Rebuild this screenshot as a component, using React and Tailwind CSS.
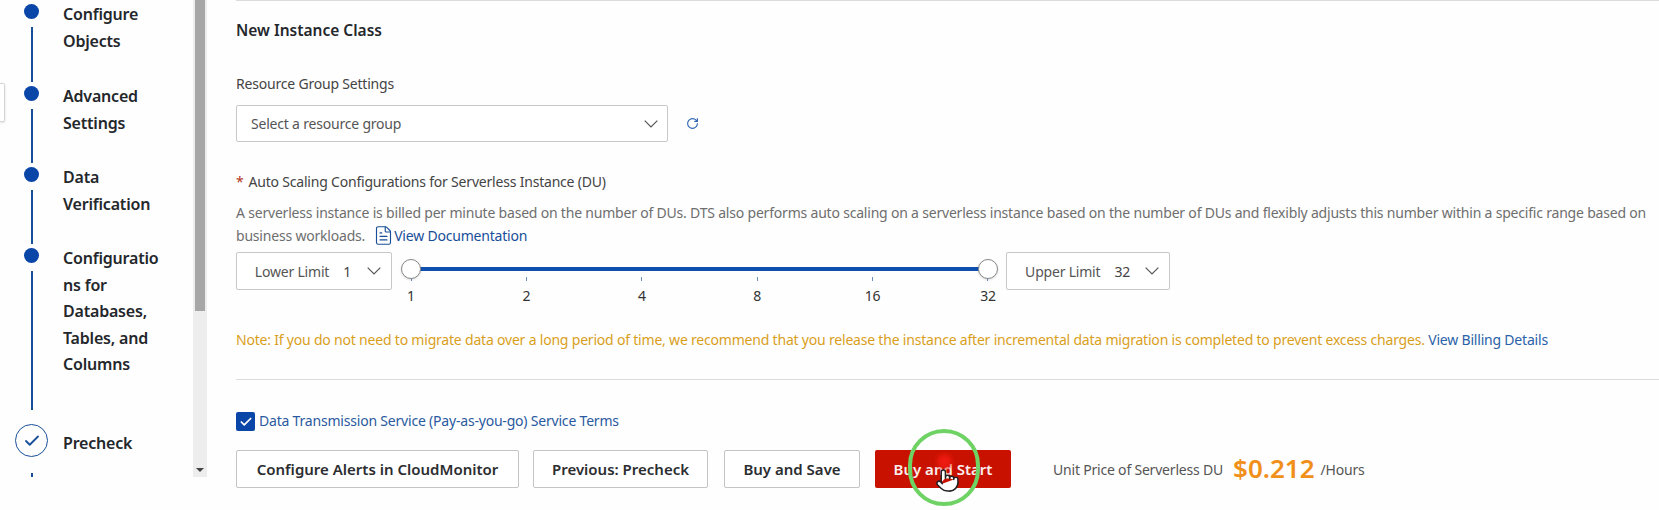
import React from "react";
import { RotateCw, FileText, Check, Pointer } from "lucide-react";

function Chevron() {
  return (
    <svg width="14" height="8" viewBox="0 0 14 8" fill="none" className="shrink-0">
      <path d="M0.7 0.7 L7 7 L13.3 0.7" stroke="#555" strokeWidth="1.2" />
    </svg>
  );
}

function Step({ lines, height }) {
  return (
    <div className="flex" style={{ height }}>
      <div className="w-[63px] shrink-0 flex flex-col items-center">
        <div className="w-[15px] h-[15px] rounded-full bg-[#0a45a8] shrink-0 mt-[2px]"></div>
        <div className="w-[2px] flex-1 bg-[#184f99] mt-[8px] mb-[2px]"></div>
      </div>
      <div className="text-[16px] leading-[26.5px] font-semibold text-[#24272b] tracking-[-0.2px] w-[100px] -mt-[1px]">
        {lines.map((l) => (
          <div key={l} className="whitespace-nowrap">{l}</div>
        ))}
      </div>
    </div>
  );
}

function LimitSelect({ label, value, width, pr, gap }) {
  return (
    <div className={`h-[38px] shrink-0 border border-[#c8c8c8] rounded-[2px] bg-white flex items-center justify-end text-[14px] text-[#555] ${width} ${pr}`}>
      <span>{label}</span>
      <span className="ml-[14px] text-[#444]">{value}</span>
      <span className={gap}><Chevron /></span>
    </div>
  );
}

function Btn({ children, width }) {
  return (
    <div className={`h-[38px] shrink-0 border border-[#c4c4c4] rounded-[2px] bg-white flex items-center justify-center text-[15px] font-semibold tracking-normal text-[#2b2d30] ${width}`}>
      {children}
    </div>
  );
}

const ticks = ["1", "2", "4", "8", "16", "32"];

export default function App() {
  return (
    <div className="w-[1659px] h-[510px] overflow-hidden bg-[#fefefe] flex font-['Noto_Sans','Open_Sans',sans-serif] relative">
      <div className="absolute left-0 top-[83px] w-[5px] h-[39px] bg-white border border-l-0 border-[#d4d4d4] rounded-r-[2px] shadow-sm"></div>
      <aside className="w-[207px] h-[477px] shrink-0 flex">
        <div className="w-[193px] h-full overflow-hidden pt-[2px]">
          <Step lines={["Configure", "Objects"]} height="82px" />
          <Step lines={["Advanced", "Settings"]} height="81px" />
          <Step lines={["Data", "Verification"]} height="81px" />
          <Step lines={["Configuratio", "ns for", "Databases,", "Tables, and", "Columns"]} height="166px" />
          <div className="flex items-center mt-[12px]">
            <div className="w-[63px] shrink-0 flex justify-center">
              <div className="w-[33px] h-[33px] rounded-full border border-[#184f99] flex items-center justify-center">
                <Check className="w-[18px] h-[18px] text-[#184f99]" strokeWidth={2.4} />
              </div>
            </div>
            <div className="text-[16px] font-semibold tracking-[-0.2px] text-[#24272b] mt-[5px]">Precheck</div>
          </div>
          <div className="w-[63px] flex justify-center mt-[16px]">
            <div className="w-[2px] h-[4px] bg-[#184f99]"></div>
          </div>
        </div>
        <div className="w-[14px] h-full bg-[#ededed] flex flex-col items-center justify-between pb-[5px]">
          <div className="w-[10px] h-[311px] bg-[#a6a6a6]"></div>
          <div className="w-0 h-0 border-l-[4px] border-r-[4px] border-t-[4px] border-l-transparent border-r-transparent border-t-[#444]"></div>
        </div>
      </aside>

      <main className="flex-1 pl-[29px] tracking-[-0.2px]">
        <div className="h-px bg-[#dcdcdc]"></div>
        <div className="text-[15.5px] font-semibold tracking-normal text-[#24272b] leading-[20px] mt-[19px]">New Instance Class</div>
        <div className="text-[14px] text-[#444] leading-[20px] mt-[34px]">Resource Group Settings</div>
        <div className="flex items-center mt-[11px]">
          <div className="w-[432px] h-[37px] border border-[#c8c8c8] rounded-[2px] bg-white flex items-center justify-between pl-[14px] pr-[9px] text-[14px] text-[#555]">
            <span>Select a resource group</span>
            <Chevron />
          </div>
          <RotateCw className="ml-[18px] w-[13px] h-[13px] text-[#2a62b0]" strokeWidth={2} />
        </div>
        <div className="text-[14px] text-[#444] leading-[20px] mt-[30px]">
          <span className="text-[#b5361e] mr-[5px]">*</span>Auto Scaling Configurations for Serverless Instance (DU)
        </div>
        <div className="text-[14px] text-[#6e6e6e] leading-[23px] mt-[9px] w-[1410px]">
          <div className="whitespace-nowrap">A serverless instance is billed per minute based on the number of DUs. DTS also performs auto scaling on a serverless instance based on the number of DUs and flexibly adjusts this number within a specific range based on</div>
          <div className="flex items-center h-[23px]">
            <span>business workloads.</span>
            <FileText className="ml-[8px] w-[21px] h-[21px] text-[#184f99]" strokeWidth={1.3} />
            <span className="text-[#184f99]">View Documentation</span>
          </div>
        </div>
        <div className="flex items-start mt-[5px]">
          <LimitSelect label="Lower Limit" value="1" width="w-[156px]" pr="pr-[10px]" gap="ml-[16px]" />
          <div className="relative w-[577px] ml-[19px] shrink-0 flex justify-between pt-[25px]">
            <div className="absolute left-0 right-0 top-[15px] h-[4px] bg-[#0f50ae]"></div>
            <div className="absolute -left-[10px] top-[7px] w-[20px] h-[20px] rounded-full bg-white border border-[#888] shadow-sm"></div>
            <div className="absolute -right-[10px] top-[7px] w-[20px] h-[20px] rounded-full bg-white border border-[#888] shadow-sm"></div>
            {ticks.map((t) => (
              <div key={t} className="w-0 flex flex-col items-center">
                <div className="w-px h-[4px] bg-[#6e8fb8] shrink-0"></div>
                <div className="text-[14px] leading-[18px] mt-[6px] text-[#333]">{t}</div>
              </div>
            ))}
          </div>
          <div className="ml-[18px]">
            <LimitSelect label="Upper Limit" value="32" width="w-[164px]" pr="pr-[10px]" gap="ml-[15px]" />
          </div>
        </div>
        <div className="text-[14px] leading-[20px] mt-[25px] text-[#d99f1c] whitespace-nowrap">
          Note: If you do not need to migrate data over a long period of time, we recommend that you release the instance after incremental data migration is completed to prevent excess charges. <span className="text-[#2a62a8]">View Billing Details</span>
        </div>
        <div className="h-px bg-[#dcdcdc] mt-[29px]"></div>
        <div className="flex items-center mt-[32px] h-[19px]">
          <div className="w-[19px] h-[19px] rounded-[2px] bg-[#0a45a8] flex items-center justify-center shrink-0">
            <Check className="w-[14px] h-[14px] text-white" strokeWidth={3} />
          </div>
          <span className="ml-[4px] text-[14px] text-[#2a5a9f] -mt-[2px]">Data Transmission Service (Pay-as-you-go) Service Terms</span>
        </div>
        <div className="flex items-center mt-[19px]">
          <Btn width="w-[283px]">Configure Alerts in CloudMonitor</Btn>
          <div className="w-[14px] shrink-0"></div>
          <Btn width="w-[175px]">Previous: Precheck</Btn>
          <div className="w-[16px] shrink-0"></div>
          <Btn width="w-[136px]">Buy and Save</Btn>
          <div className="w-[15px] shrink-0"></div>
          <div className="relative w-[136px] h-[38px] shrink-0 rounded-[2px] bg-[#c91100] flex items-center justify-center text-[15px] font-semibold tracking-normal text-[#fbeeee]">
            Buy and Start
            <div className="absolute left-[62px] top-[4px] w-[15px] h-[15px] rounded-full bg-[#ec1a10] blur-[2px]"></div>
            <div className="absolute left-[33px] -top-[21px] w-[72px] h-[77px] rounded-full border-[4px] border-[#6fd265]"></div>
            <Pointer className="absolute left-[60px] top-[16px] w-[25px] h-[29px] text-[#222] fill-white" strokeWidth={1.4} />
          </div>
          <span className="ml-[42px] text-[14px] text-[#555]">Unit Price of Serverless DU</span>
          <span className="ml-[10px] text-[26px] leading-[38px] font-semibold tracking-normal text-[#f0901a] -mt-[3px]">$0.212</span>
          <span className="ml-[6px] text-[14px] text-[#555]">/Hours</span>
        </div>
      </main>
    </div>
  );
}
